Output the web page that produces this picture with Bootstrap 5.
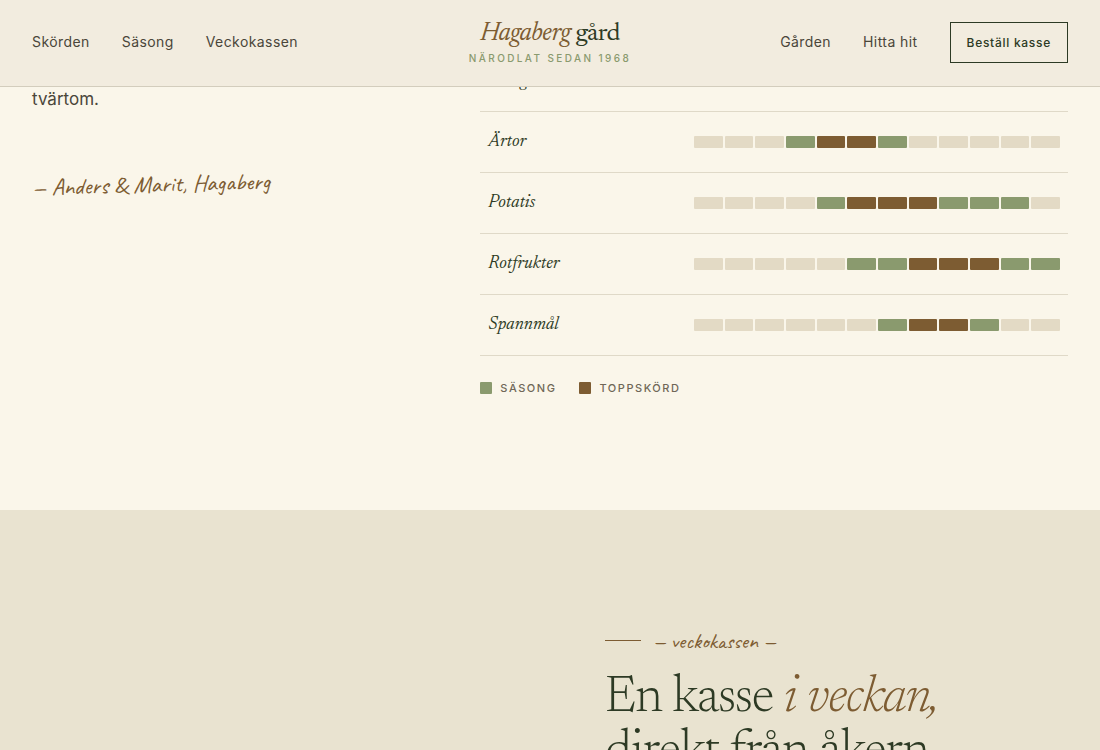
<!DOCTYPE html>
<html lang="sv">
<head>
<meta charset="utf-8">
<meta name="viewport" content="width=device-width, initial-scale=1">
<title>Hagaberg gård</title>
<link href="https://cdn.jsdelivr.net/npm/bootstrap@5.3.0/dist/css/bootstrap.min.css" rel="stylesheet">
<style>
  :root {
    --cream: #faf6ea; --nav: #f2ecdf; --sand: #e9e3d0; --tile: #e3dac5;
    --forest: #2d3a24; --ink: #4a463a; --earth: #7d5c32; --sage: #8a9a6e; --rule: #dfd9c8;
    --serif: Newsreader, "Liberation Serif", serif;
    --hand: Caveat, "Liberation Serif", cursive;
  }
  body { background: var(--cream); color: var(--ink); font-family: Inter, sans-serif; font-size: 17px; }
  a { color: inherit; text-decoration: none; }
  .site-bar { background: var(--nav); border-bottom: 1px solid #d3cdbd; padding: 18px 32px 20px; }
  .bar-side { flex: 1 1 0; gap: 32px; font-size: 14px; line-height: 24px; letter-spacing: .03em; }
  .brand-name { font-family: var(--serif); font-size: 26px; line-height: 32px; letter-spacing: -.02em; color: var(--forest); }
  .brand-name em, .headline em { color: var(--earth); }
  .brand-tag { font-size: 10px; line-height: 16px; letter-spacing: .24em; font-weight: 500; color: var(--sage); }
  .btn-order { border: 1px solid var(--forest); border-radius: 0; color: var(--forest); font-size: 12px; font-weight: 500; letter-spacing: .06em; line-height: 19px; padding: 10px 16px; }
  .page-x { padding-left: 32px; padding-right: 32px; }
  .season { padding-top: 50px; padding-bottom: 114px; }
  .season .row { --bs-gutter-x: 40px; }
  .story { line-height: 30px; padding-top: 34px; }
  .signature { font-family: var(--hand); font-size: 24px; font-weight: 500; line-height: 32px; color: var(--earth); margin-top: 52px; transform: rotate(-1.5deg); }
  .crops { --bs-table-bg: transparent; border-color: var(--rule); table-layout: fixed; margin-bottom: 24px; }
  .crops th, .crops td { height: 61px; padding: 0 8px; vertical-align: middle; }
  .crops th { width: 35%; font-family: var(--serif); font-style: italic; font-weight: 400; font-size: 18px; color: var(--forest); padding-top: 2px; }
  .months { gap: 2px; height: 12px; }
  .months span { flex: 1; border-radius: 1px; background: var(--tile); }
  .months .on, .swatch.on { background: var(--sage); }
  .months .top, .swatch.top { background: var(--earth); }
  .legend-row { gap: 23px; font-size: 11px; line-height: 16px; font-weight: 500; letter-spacing: .14em; color: #6f6757; }
  .swatch { width: 12px; height: 12px; border-radius: 1px; }
  .box-offer { background: var(--sand); padding-top: 113px; padding-bottom: 112px; }
  .box-offer .row { --bs-gutter-x: 110px; }
  .kicker { gap: 12px; font-family: var(--hand); font-size: 22px; font-weight: 500; line-height: 36px; color: var(--earth); }
  .kicker i { width: 36px; height: 1px; background: var(--earth); }
  .headline { font-family: var(--serif); font-size: 52px; line-height: 54px; font-weight: 350; letter-spacing: -.02em; color: var(--forest); margin-top: 13px; }
</style>
</head>
<body>
<nav class="site-bar fixed-top d-flex align-items-center">
  <div class="bar-side d-flex">
    <a href="#skorden">Skörden</a><a href="#sasong">Säsong</a><a href="#kassen">Veckokassen</a>
  </div>
  <a class="text-center" href="#">
    <div class="brand-name"><em>Hagaberg</em> gård</div>
    <div class="brand-tag">NÄRODLAT SEDAN 1968</div>
  </a>
  <div class="bar-side d-flex justify-content-end align-items-center">
    <a href="#garden">Gården</a><a href="#hitta">Hitta hit</a>
    <button class="btn btn-order" type="button">Beställ kasse</button>
  </div>
</nav>
<main>
  <section class="season page-x" id="sasong">
    <div class="row">
      <div class="col-5">
        <p class="story mb-0">tvärtom.</p>
        <p class="signature mb-0">— Anders &amp; Marit, Hagaberg</p>
      </div>
      <div class="col-7">
        <table class="table crops">
          <tbody id="crop-rows"></tbody>
        </table>
        <div class="legend-row d-flex">
          <div class="d-flex align-items-center gap-2"><span class="swatch on"></span>SÄSONG</div>
          <div class="d-flex align-items-center gap-2"><span class="swatch top"></span>TOPPSKÖRD</div>
        </div>
      </div>
    </div>
  </section>
  <section class="box-offer page-x" id="kassen">
    <div class="row">
      <div class="col-6 offset-6">
        <div class="kicker d-flex align-items-center"><i></i>— veckokassen —</div>
        <h2 class="headline mb-0">En kasse <em>i veckan,</em><br>direkt från åkern.</h2>
      </div>
    </div>
  </section>
</main>
<script src="https://cdn.jsdelivr.net/npm/bootstrap@5.3.0/dist/js/bootstrap.bundle.min.js"></script>
<script>
  // One character per month: "." off season, "s" in season, "t" peak harvest.
  const crops = [
    ["Bladgrönt", "...ssttttss."],
    ["Ärtor", "...stts....."],
    ["Potatis", "....stttsss."],
    ["Rotfrukter", ".....sstttss"],
    ["Spannmål", "......stts.."]
  ];
  const kind = { ".": "", s: "on", t: "top" };
  document.getElementById("crop-rows").innerHTML = crops.map(([name, year]) =>
    `<tr><th scope="row">${name}</th><td><div class="months d-flex">${[...year].map(m => `<span class="${kind[m]}"></span>`).join("")}</div></td></tr>`
  ).join("");
</script>
</body>
</html>
